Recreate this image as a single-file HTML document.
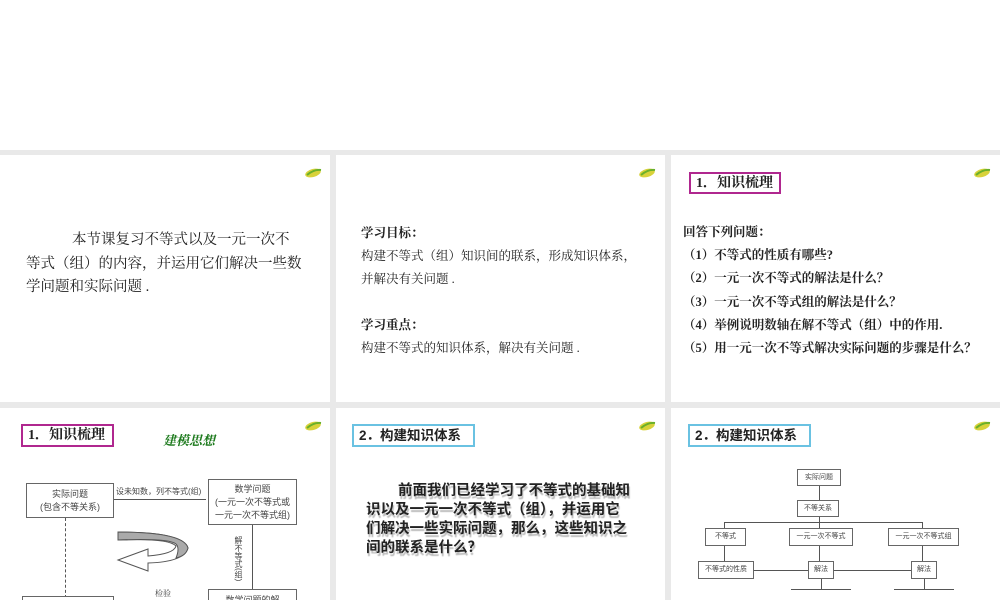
<!DOCTYPE html>
<html><head><meta charset="utf-8"><style>
*{margin:0;padding:0;box-sizing:border-box}
body{width:1000px;height:600px;background:#e9e9e9;position:relative;overflow:hidden;font-family:"Liberation Serif","Noto Serif CJK SC",serif;color:#222}
.p{position:absolute;background:#fff;overflow:hidden}
.a{position:absolute;white-space:nowrap}
.leaf{position:absolute;width:18px;height:11px}
.t{position:absolute;font-weight:bold;font-size:14px;line-height:19px;padding:0 0 0 5px;background:#fff;white-space:nowrap;font-family:"Liberation Serif","Noto Serif CJK SC",serif}
.b{position:absolute;border:1px solid #666;font-family:"Liberation Sans","Noto Sans CJK SC",sans-serif;color:#444;text-align:center;background:#fff;white-space:nowrap}
.l{position:absolute;background:#555}
</style></head><body>
<div class="p" style="left:0;top:0;width:1000px;height:150px"></div>

<svg width="0" height="0" style="position:absolute"><defs><g id="lf"><ellipse cx="9" cy="6" rx="8" ry="4" fill="#d8d23a" transform="rotate(-15 9 6)"/><path d="M3 8 Q10 2 17 3" stroke="#6ab02a" stroke-width="2" fill="none"/></g></defs></svg>

<!-- row1 -->
<div class="p" style="left:0;top:155px;width:330px;height:247px">
<svg class="leaf" style="left:304px;top:12px"><use href="#lf"/></svg>
<div class="a" style="left:26px;top:74px;font-size:14.5px;line-height:23.5px"><span style="padding-left:46px"></span>本节课复习不等式以及一元一次不<br>等式（组）的内容，并运用它们解决一些数<br>学问题和实际问题 .</div>
</div>
<div class="p" style="left:336px;top:155px;width:329px;height:247px">
<svg class="leaf" style="left:302px;top:12px"><use href="#lf"/></svg>
<div class="a" style="left:25px;top:67px;font-size:12.5px;line-height:23px">
<b>学习目标：</b><br>构建不等式（组）知识间的联系，形成知识体系，<br>并解决有关问题 .<br><br><b>学习重点：</b><br>构建不等式的知识体系，解决有关问题 .</div>
</div>
<div class="p" style="left:671px;top:155px;width:329px;height:247px">
<svg class="leaf" style="left:302px;top:12px"><use href="#lf"/></svg>
<div class="t" style="left:18px;top:17px;border:2px solid #b0278f;height:22px;width:92px">1．知识梳理</div>
<div class="a" style="left:12px;top:66px;font-size:12.5px;line-height:23.2px;font-weight:bold">回答下列问题：<br>（1）不等式的性质有哪些?<br>（2）一元一次不等式的解法是什么？<br>（3）一元一次不等式组的解法是什么？<br>（4）举例说明数轴在解不等式（组）中的作用.<br>（5）用一元一次不等式解决实际问题的步骤是什么？</div>
</div>

<!-- row2 -->
<div class="p" style="left:0;top:408px;width:330px;height:192px">
<svg class="leaf" style="left:304px;top:12px"><use href="#lf"/></svg>
<div class="t" style="left:21px;top:16px;border:2px solid #b0278f;height:23px;width:93px">1．知识梳理</div>
<div class="a" style="left:163px;top:22px;font-size:13px;font-weight:bold;color:#1d7a1d;font-style:italic">建模思想</div>
<div class="b" style="left:26px;top:75px;width:88px;height:35px;font-size:9px;line-height:13px;padding-top:4px">实际问题<br>(包含不等关系)</div>
<div class="l" style="left:114px;top:91px;width:92px;height:1px"></div>
<div class="a" style="left:116px;top:78px;font-size:8px;color:#444;font-family:'Liberation Sans','Noto Sans CJK SC',sans-serif">设未知数，列不等式(组)</div>
<div class="b" style="left:208px;top:71px;width:89px;height:46px;font-size:9px;line-height:13px;padding-top:3px">数学问题<br>(一元一次不等式或<br>一元一次不等式组)</div>
<div class="l" style="left:252px;top:117px;width:1px;height:64px"></div>
<div class="a" style="left:233px;top:128px;font-size:8px;writing-mode:vertical-rl;color:#444;font-family:'Liberation Sans','Noto Sans CJK SC',sans-serif">解不等式(组)</div>
<div class="a" style="left:65px;top:110px;height:80px;border-left:1px dashed #555"></div>
<svg class="a" style="left:114px;top:120px" width="82" height="50"><path d="M4 4 Q70 4 74 20 Q70 34 34 35 L34 43 L4 32 L34 21 L34 28 Q60 26 62 18 Q55 10 4 12 Z" fill="#fff" stroke="#555"/><path d="M4 4 Q70 4 74 20 Q72 28 62 30 Q66 20 62 16 Q55 10 4 12Z" fill="#aaa" stroke="#555"/></svg>
<div class="a" style="left:155px;top:180px;font-size:8px;color:#444">检验</div>
<div class="b" style="left:208px;top:181px;width:89px;height:20px;font-size:9px;padding-top:3px">数学问题的解</div>
<div class="b" style="left:22px;top:188px;width:92px;height:20px"></div>
</div>

<div class="p" style="left:336px;top:408px;width:329px;height:192px">
<svg class="leaf" style="left:302px;top:12px"><use href="#lf"/></svg>
<div class="t" style="left:16px;top:16px;border:2px solid #6ac2e2;height:23px;width:123px;font-size:13.5px;font-family:'Liberation Sans','Noto Sans CJK SC',sans-serif">2．构建知识体系</div>
<div class="a" style="left:30px;top:74px;font-size:14.5px;line-height:19px;font-weight:bold;font-family:'Liberation Sans','Noto Sans CJK SC',sans-serif;text-shadow:1px 3px 1px #bbb"><span style="padding-left:32px"></span>前面我们已经学习了不等式的基础知<br>识以及一元一次不等式（组），并运用它<br>们解决一些实际问题，那么，这些知识之<br>间的联系是什么？</div>
</div>

<div class="p" style="left:671px;top:408px;width:329px;height:192px">
<svg class="leaf" style="left:302px;top:12px"><use href="#lf"/></svg>
<div class="t" style="left:17px;top:16px;border:2px solid #6ac2e2;height:23px;width:123px;font-size:13.5px;font-family:'Liberation Sans','Noto Sans CJK SC',sans-serif">2．构建知识体系</div>
<div class="b" style="left:126px;top:61px;width:44px;height:17px;font-size:7px;line-height:15px">实际问题</div>
<div class="l" style="left:148px;top:78px;width:1px;height:14px"></div>
<div class="b" style="left:126px;top:92px;width:42px;height:17px;font-size:7px;line-height:15px">不等关系</div>
<div class="l" style="left:148px;top:109px;width:1px;height:6px"></div>
<div class="l" style="left:53px;top:114px;width:199px;height:1px"></div>
<div class="l" style="left:53px;top:114px;width:1px;height:6px"></div>
<div class="l" style="left:148px;top:114px;width:1px;height:6px"></div>
<div class="l" style="left:251px;top:114px;width:1px;height:6px"></div>
<div class="b" style="left:34px;top:120px;width:41px;height:18px;font-size:7px;line-height:16px">不等式</div>
<div class="b" style="left:118px;top:120px;width:64px;height:18px;font-size:7px;line-height:16px">一元一次不等式</div>
<div class="b" style="left:217px;top:120px;width:71px;height:18px;font-size:7px;line-height:16px">一元一次不等式组</div>
<div class="l" style="left:53px;top:138px;width:1px;height:15px"></div>
<div class="l" style="left:148px;top:138px;width:1px;height:15px"></div>
<div class="l" style="left:251px;top:138px;width:1px;height:15px"></div>
<div class="b" style="left:27px;top:153px;width:56px;height:18px;font-size:7px;line-height:16px">不等式的性质</div>
<div class="l" style="left:83px;top:162px;width:55px;height:1px"></div>
<div class="b" style="left:137px;top:153px;width:26px;height:18px;font-size:7px;line-height:16px">解法</div>
<div class="l" style="left:163px;top:162px;width:77px;height:1px"></div>
<div class="b" style="left:240px;top:153px;width:26px;height:18px;font-size:7px;line-height:16px">解法</div>
<div class="l" style="left:150px;top:171px;width:1px;height:10px"></div>
<div class="l" style="left:120px;top:181px;width:60px;height:1px"></div>
<div class="l" style="left:253px;top:171px;width:1px;height:10px"></div>
<div class="l" style="left:223px;top:181px;width:60px;height:1px"></div>
<div class="b" style="left:110px;top:194px;width:25px;height:18px"></div>
<div class="b" style="left:160px;top:194px;width:30px;height:18px"></div>
<div class="b" style="left:213px;top:194px;width:25px;height:18px"></div>
<div class="b" style="left:262px;top:194px;width:30px;height:18px"></div>
</div>
</body></html>
